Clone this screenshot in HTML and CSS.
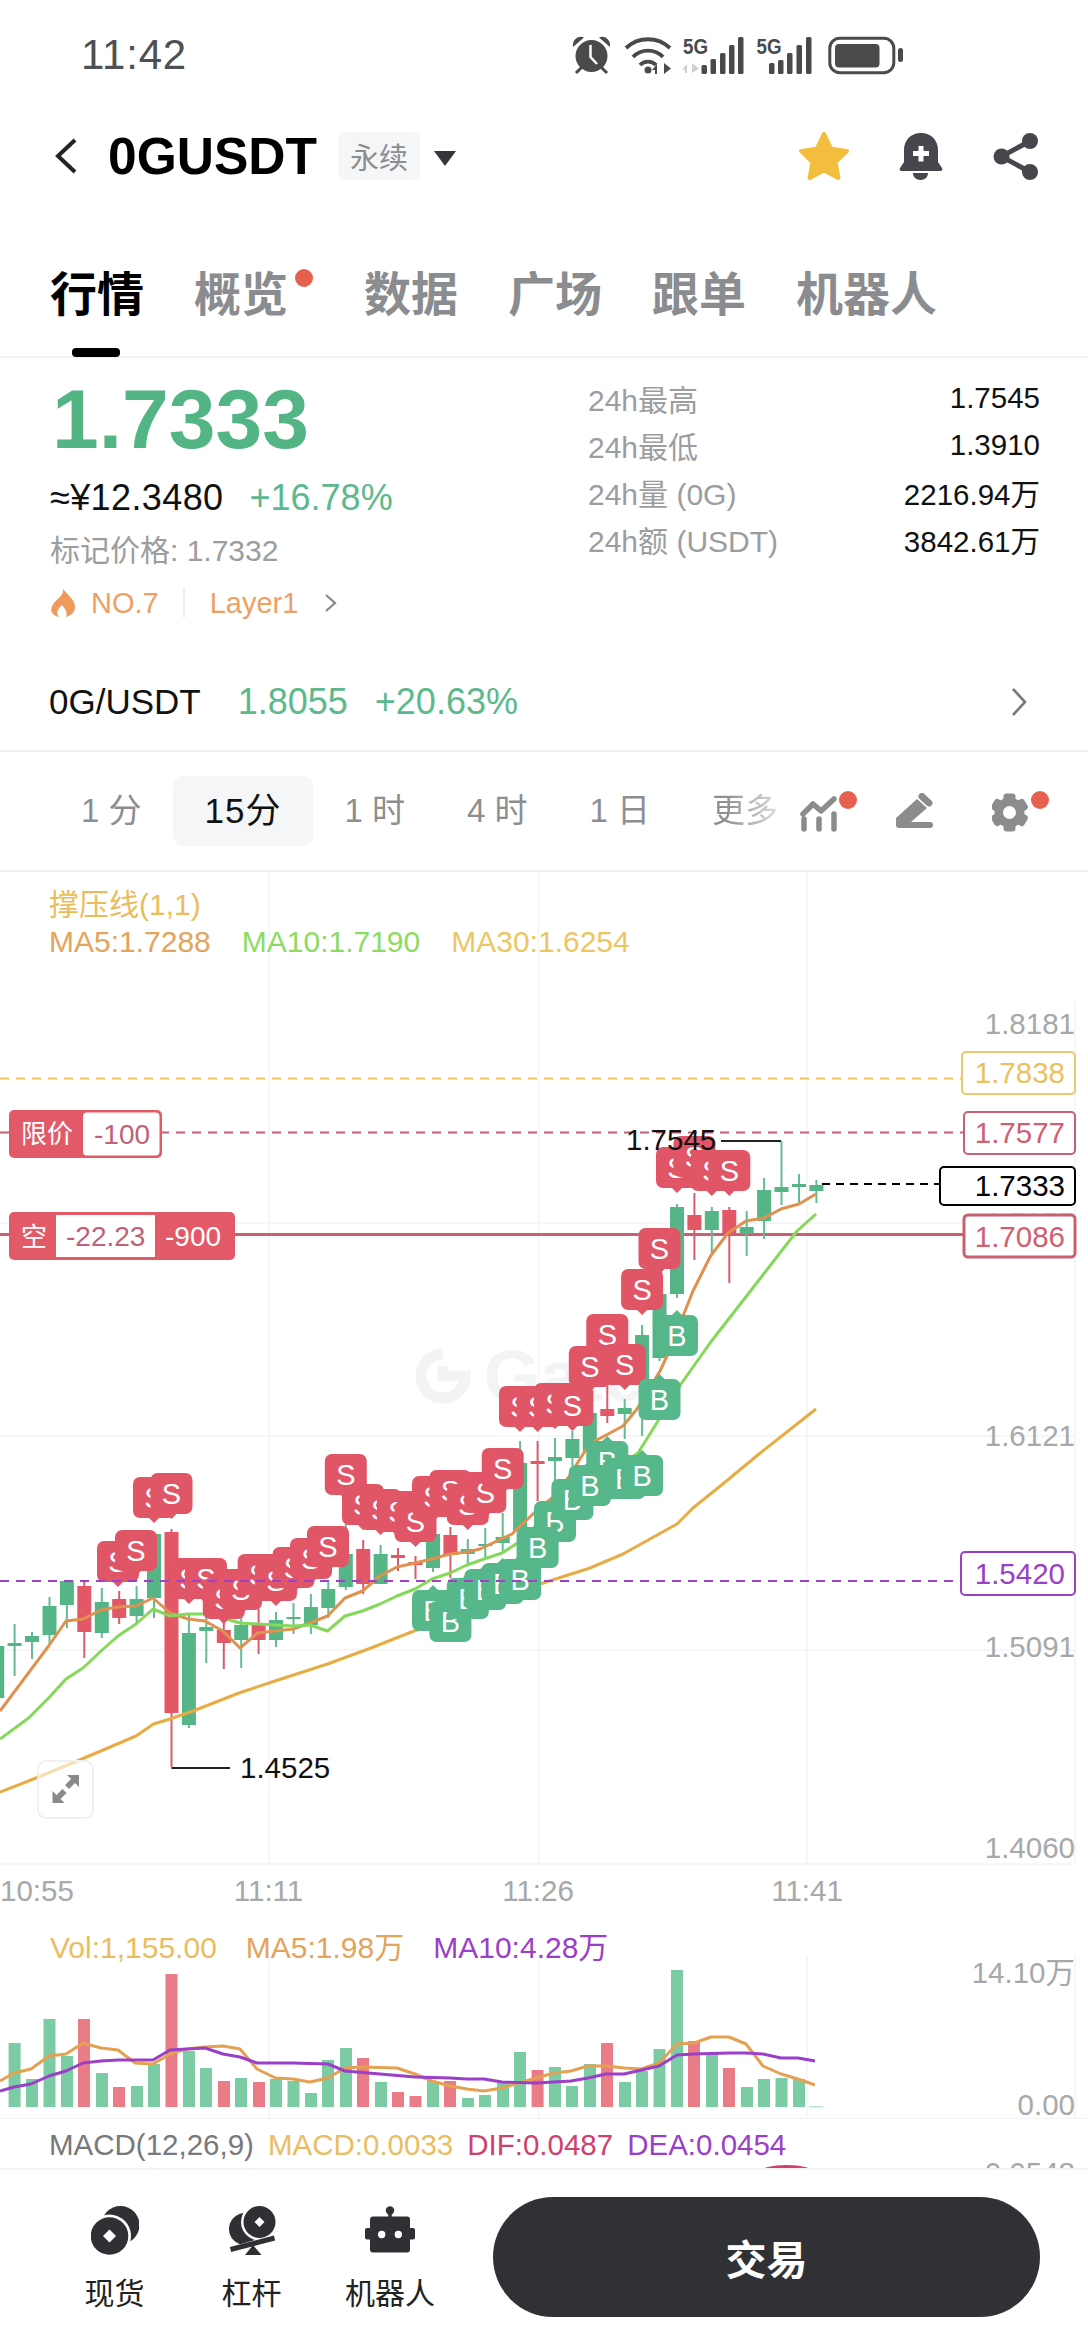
FILE: index.html
```html
<!DOCTYPE html>
<html lang="zh">
<head>
<meta charset="utf-8">
<title>0GUSDT</title>
<link rel="stylesheet" href="styles.css">
</head>
<body>
<div class="page">
  <div class="status">
    <span class="time">11:42</span>
    <svg class="status-icons" viewBox="0 0 360 70" width="360" height="70">
      <g fill="#4a4a4d" stroke="none">
        <circle cx="31.5" cy="36" r="16"/>
        <path d="M13 27C12 20 18 15 24 17.500L13 27ZM50 27C51 20 45 15 39 17.500L50 27Z"/>
        <path d="M30.500 25V37L37 44" fill="none" stroke="#fff" stroke-width="2.500"/>
        <path d="M16 53L22 47M47 53L41 47" fill="none" stroke="#4a4a4d" stroke-width="3"/>
        <g fill="none" stroke="#4a4a4d" stroke-width="3.800">
          <path d="M66 28A32 32 0 0 1 110 28"/>
          <path d="M73 37A21 21 0 0 1 103 37"/>
          <path d="M80 45A11 11 0 0 1 96 45"/>
        </g>
        <circle cx="88" cy="50" r="3.500"/>
        <path d="M97 54V44L92 50H95V54ZM104 43V54L111 48.500Z"/>
        <text class="five" x="123" y="33.500" textLength="25" lengthAdjust="spacingAndGlyphs">5G</text>
        <path d="M127 53V44L122 49.500H125V53ZM132 43V53L139 48.500Z" fill="#d0d0d2"/>
        <rect x="141.500" y="45" width="5.500" height="9" rx="1.500"/>
        <rect x="150.500" y="39" width="5.500" height="15" rx="1.500"/>
        <rect x="160" y="33" width="5.500" height="21" rx="1.500"/>
        <rect x="169" y="25" width="5.500" height="29" rx="1.500"/>
        <rect x="178" y="17" width="5.500" height="37" rx="1.500"/>
        <text class="five" x="196.500" y="33.500" textLength="25" lengthAdjust="spacingAndGlyphs">5G</text>
        <rect x="209" y="43" width="5.500" height="11" rx="1.500"/>
        <rect x="218" y="40" width="5.500" height="14" rx="1.500"/>
        <rect x="227" y="33" width="5.500" height="21" rx="1.500"/>
        <rect x="236.500" y="25" width="5.500" height="29" rx="1.500"/>
        <rect x="246" y="17" width="5.500" height="37" rx="1.500"/>
        <rect x="269.800" y="18.200" width="64" height="34.500" rx="10" fill="none" stroke="#4a4a4d" stroke-width="3"/>
        <rect x="275" y="24" width="44.500" height="23.500" rx="4"/>
        <rect x="338" y="28" width="5" height="14" rx="2.500"/>
      </g>
    </svg>
  </div>

  <header class="header">
    <svg class="back" viewBox="0 0 24 38" width="24" height="38"><path d="M21 3L4 19L21 35" fill="none" stroke="#222" stroke-width="4"/></svg>
    <span class="symbol">0GUSDT</span>
    <span class="perp">永续</span>
    <svg class="caret" viewBox="0 0 22 15" width="22" height="15"><path d="M0 0H22L11 15Z" fill="#35363a"/></svg>
    <div class="header-icons">
      <svg viewBox="1.500 1.700 21 20.200" width="50" height="48"><polygon points="12,2.600 15,8.800 21.600,9.700 16.800,14.400 18,21 12,17.800 6,21 7.200,14.400 2.400,9.700 9,8.800" fill="#f3bd3e" stroke="#f3bd3e" stroke-width="1.800" stroke-linejoin="round"/></svg>
      <svg viewBox="0 0 44 47" width="44" height="47"><path d="M22 0C12 0 5 7 5 17V29L1 35C0 37 1 38 3 38H41C43 38 44 37 43 35L39 29V17C39 7 32 0 22 0Z" fill="#46474c"/><path d="M14 40H29C29 44 26 47 21.500 47S14 44 14 40Z" fill="#46474c"/><path d="M19.500 13h5v5h5.500v5h-5.500v5.500h-5v-5.500h-5.500v-5h5.500z" fill="#fff"/></svg>
      <svg viewBox="0 0 45 47" width="45" height="47"><path d="M37 8L8.500 23.500L37 39" fill="none" stroke="#46474c" stroke-width="5"/><circle cx="37" cy="8" r="8" fill="#46474c"/><circle cx="8.500" cy="23.500" r="8" fill="#46474c"/><circle cx="37" cy="39" r="8" fill="#46474c"/></svg>
    </div>
  </header>

  <nav class="tabs">
    <div class="tab tab-on">行情<i class="tab-bar"></i></div>
    <div class="tab tab-dot">概览<i class="dot"></i></div>
    <div class="tab">数据</div>
    <div class="tab">广场</div>
    <div class="tab">跟单</div>
    <div class="tab">机器人</div>
  </nav>

  <section class="stats">
    <div class="stats-left">
      <div class="price">1.7333</div>
      <div class="sub"><span class="cny">≈¥12.3480</span><span class="up">+16.78%</span></div>
      <div class="mark">标记价格: 1.7332</div>
      <div class="rank">
        <svg viewBox="0 0 25 28" width="25" height="28"><path d="M13 0C14 6 8 9 4 14C1 18 0 22 3 25C5 27 8 28 9 28C6 25 7 20 12 16C15 20 18 23 16 28C20 27 25 24 25 18C25 11 18 6 13 0Z" fill="#ef9a5c"/></svg>
        <span class="rank-no">NO.7</span>
        <i class="rank-sep"></i>
        <span>Layer1</span>
        <svg class="rank-arrow" viewBox="0 0 13 18" width="13" height="18"><path d="M2 1L11 9L2 17" fill="none" stroke="#888" stroke-width="2.200"/></svg>
      </div>
    </div>
    <div class="stats-right">
      <div class="row"><span>24h最高</span><b>1.7545</b></div>
      <div class="row"><span>24h最低</span><b>1.3910</b></div>
      <div class="row"><span>24h量 (0G)</span><b>2216.94万</b></div>
      <div class="row"><span>24h额 (USDT)</span><b>3842.61万</b></div>
    </div>
  </section>

  <section class="spot">
    <span class="spot-name">0G/USDT</span>
    <span class="spot-val">1.8055</span>
    <span class="spot-val">+20.63%</span>
    <svg class="spot-arrow" viewBox="0 0 16 28" width="16" height="28"><path d="M2 1L14 14L2 27" fill="none" stroke="#77797c" stroke-width="2.600"/></svg>
  </section>

  <section class="periods">
    <span class="per">1 分</span>
    <span class="per per-on">15分</span>
    <span class="per">1 时</span>
    <span class="per">4 时</span>
    <span class="per">1 日</span>
    <span class="per per-more">更多</span>
    <div class="tools">
      <svg viewBox="0 0 57 41" width="57" height="41"><g fill="none" stroke="#8a8c8e" stroke-linecap="round" stroke-linejoin="round"><path d="M3 23L13 13L21 20L34 8" stroke-width="5.500"/><path d="M4 28V38M19 28V38M34 23V38" stroke-width="5.500"/></g><circle cx="48" cy="9" r="9" fill="#e7604f"/></svg>
      <svg class="tool-pen" viewBox="0 0 37 36" width="37" height="36"><path d="M0 25L21 6L31 15L15 29H34a3 3 0 0 1 0 6H3a3 3 0 0 1 -3 -3Z" fill="#8a8c8e"/><path d="M26 3.500L33 10" stroke="#8a8c8e" stroke-width="7" stroke-linecap="round"/></svg>
      <svg viewBox="0 0 57 41" width="57" height="41"><g transform="translate(17.500,21.500)" fill="#8a8c8e"><circle r="15"/><rect x="-6" y="-19" width="12" height="9" rx="3"/><rect x="-6" y="-19" width="12" height="9" rx="3" transform="rotate(60)"/><rect x="-6" y="-19" width="12" height="9" rx="3" transform="rotate(120)"/><rect x="-6" y="-19" width="12" height="9" rx="3" transform="rotate(180)"/><rect x="-6" y="-19" width="12" height="9" rx="3" transform="rotate(240)"/><rect x="-6" y="-19" width="12" height="9" rx="3" transform="rotate(300)"/><circle r="6.500" fill="#fff"/></g><circle cx="48" cy="9" r="9" fill="#e7604f"/></svg>
    </div>
  </section>

  <section class="chart">
    <svg class="plot" viewBox="0 871 1088 1043" width="1088" height="1043">
      <defs>
        <path id="ms" d="M-14 0H14a7 7 0 0 1 7 7V34a7 7 0 0 1 -7 7H5L0 46L-5 41H-14a7 7 0 0 1 -7 -7V7a7 7 0 0 1 7 -7Z"/>
        <path id="mb" d="M-14 0H-5L0 -5L5 0H14a7 7 0 0 1 7 7V34a7 7 0 0 1 -7 7H-14a7 7 0 0 1 -7 -7V7a7 7 0 0 1 7 -7Z"/>
      </defs>
      <path class="grid" d="M269 871V1863M538.500 871V1863M807 871V1863M1075 1000V1863M0 1222H1075M0 1435H1075M0 1649H1075M0 1863H1075"/>
      <g class="wm"><path d="M443 1353A22 22 0 1 0 465 1375H443V1365" fill="none" stroke="#f1f3f4" stroke-width="11"/><text class="wm-t" x="484" y="1400">Gate</text></g>

      <text class="ax" x="1075" y="1033" text-anchor="end">1.8181</text>
      <text class="ax" x="1075" y="1445" text-anchor="end">1.6121</text>
      <text class="ax" x="1075" y="1656" text-anchor="end">1.5091</text>
      <text class="ax" x="1075" y="1857" text-anchor="end">1.4060</text>
      <text class="ax ax-faint" x="1075" y="1232" text-anchor="end">1.7157</text>

      <path d="M0 1077.500H961" class="dash-y"/>
      <path d="M0 1131.500H963" class="dash-r"/>
      <path d="M0 1233.500H963" class="line-r"/>

      <path class="wick-g" d="M816.400 1179V1202M799 1173V1203M781.500 1140V1204M764.100 1177V1238M746.700 1210V1255M711.800 1206V1252M677 1203V1297M659.500 1280V1360M642.100 1324V1435M624.700 1398V1438M589.800 1400V1450M572.400 1430V1465M555 1437V1490M520.100 1440V1540M502.700 1512V1550M485.300 1527V1557M467.800 1538V1563M433 1530V1571M380.600 1544V1583M345.800 1523V1589M328.300 1580V1617M310.900 1593V1633M293.500 1602V1633M276 1611V1646M241.200 1610V1667M206.300 1600V1662M188.900 1613V1727M154 1533V1617M136.600 1585V1622M101.800 1587V1637M66.900 1580V1627M49.500 1596V1643M32 1631V1658M14.600 1623V1675"/>
      <path class="wick-r" d="M729.300 1206V1282M694.400 1192V1259M607.300 1385V1422M537.600 1440V1500M450.400 1526V1577M415.500 1555V1578M398 1547V1570M363.200 1539V1593M258.600 1608V1653M223.800 1613V1668M171.500 1528V1766M119.200 1590V1623M84.300 1580V1657"/>
      <path class="body-g" d="M809.400 1184h14v6h-14zM792 1183h14v3h-14zM774.500 1186h14v5h-14zM757.100 1189h14v31h-14zM739.700 1226h14v7h-14zM704.800 1210h14v19h-14zM670 1206h14v87h-14zM652.500 1293h14v64h-14zM635.100 1334h14v46h-14zM617.700 1407h14v6h-14zM582.800 1412h14v38h-14zM565.400 1438h14v19h-14zM548 1456h14v4h-14zM513.100 1462h14v68h-14zM495.700 1536h14v6h-14zM478.300 1543h14v2h-14zM460.800 1548h14v5h-14zM426 1533h14v34h-14zM373.600 1553h14v30h-14zM338.800 1553h14v33h-14zM321.300 1588h14v19h-14zM303.900 1606h14v18h-14zM286.500 1616h14v2h-14zM269 1619h14v20h-14zM234.200 1624h14v15h-14zM199.300 1626h14v4h-14zM181.900 1632h14v92h-14zM147 1533h14v64h-14zM129.600 1598h14v17h-14zM94.800 1601h14v31h-14zM59.900 1580h14v24h-14zM42.500 1605h14v29h-14zM25 1635h14v6h-14zM7.600 1642h14v3h-14zM-9.800 1645h14v52h-14z"/>
      <path class="body-r" d="M722.300 1209h14v24h-14zM687.400 1214h14v15h-14zM600.300 1408h14v7h-14zM530.600 1460h14v3h-14zM443.400 1534h14v20h-14zM408.500 1561h14v3h-14zM391 1554h14v3h-14zM356.200 1548h14v35h-14zM251.600 1624h14v15h-14zM216.800 1629h14v13h-14zM164.500 1531h14v181h-14zM112.200 1598h14v19h-14zM77.300 1585h14v46h-14z"/>

      <polyline class="ma ma5" points="0,1710 48.600,1645 66,1620 83,1618 101,1609 118,1606 136,1605 153,1597 170,1612 188,1618 205,1620 223,1630 240,1647 257.500,1632 275,1630 293,1628 310,1622 327.500,1615 345,1597 362.500,1590 380,1575 397,1566 415,1562 432,1558 450,1553 467,1551 480,1548 512,1533 533,1513 552,1497 568,1477 585,1450 595,1440 623,1425 637,1408 660,1370 667,1355 693,1290 710.500,1255 728,1232 746,1220 764,1217 781,1208 799,1203 816,1193"/>
      <polyline class="ma ma10" points="0,1738 28.600,1717 48.600,1697 66,1678 83,1667 101,1650 118,1635 136,1623 153,1608 170,1615 188,1613 205,1613 223,1617 240,1622 257.500,1623 275,1624 293,1625 310,1624 327.500,1630 345,1615 362.500,1610 380,1603 397,1595 415,1588 432,1578 450,1572 467,1564 484,1558 502,1552 516,1543 638,1452 681,1383 710,1342 745,1297 797,1230 816,1213"/>
      <polyline class="ma ma30" points="0,1791 36,1777 82,1758 136,1735 153.500,1723 170,1718 193,1710 239,1692 275,1680 327.500,1663 371,1647 414,1630 543,1582 590,1567 623,1553 677,1523 693,1507 724,1482 759,1453 816,1408"/>

      <g class="mk-s">
        <g transform="translate(118,1540)"><use href="#ms"/><text x="0" y="31">S</text></g>
        <g transform="translate(136,1529)"><use href="#ms"/><text x="0" y="31">S</text></g>
        <g transform="translate(154,1476)"><use href="#ms"/><text x="0" y="31">S</text></g>
        <g transform="translate(171.500,1472)"><use href="#ms"/><text x="0" y="31">S</text></g>
        <g transform="translate(189,1557)"><use href="#ms"/><text x="0" y="31">S</text></g>
        <g transform="translate(206,1557)"><use href="#ms"/><text x="0" y="31">S</text></g>
        <g transform="translate(223.800,1577)"><use href="#ms"/><text x="0" y="31">S</text></g>
        <g transform="translate(241,1568)"><use href="#ms"/><text x="0" y="31">S</text></g>
        <g transform="translate(258.600,1553)"><use href="#ms"/><text x="0" y="31">S</text></g>
        <g transform="translate(276,1559)"><use href="#ms"/><text x="0" y="31">S</text></g>
        <g transform="translate(293.500,1546)"><use href="#ms"/><text x="0" y="31">S</text></g>
        <g transform="translate(311,1537)"><use href="#ms"/><text x="0" y="31">S</text></g>
        <g transform="translate(328,1525)"><use href="#ms"/><text x="0" y="31">S</text></g>
        <g transform="translate(363,1483)"><use href="#ms"/><text x="0" y="31">S</text></g>
        <g transform="translate(380.600,1488)"><use href="#ms"/><text x="0" y="31">S</text></g>
        <g transform="translate(398,1490)"><use href="#ms"/><text x="0" y="31">S</text></g>
        <g transform="translate(345.800,1453)"><use href="#ms"/><text x="0" y="31">S</text></g>
        <g transform="translate(415.500,1500)"><use href="#ms"/><text x="0" y="31">S</text></g>
        <g transform="translate(433,1475)"><use href="#ms"/><text x="0" y="31">S</text></g>
        <g transform="translate(450.400,1469)"><use href="#ms"/><text x="0" y="31">S</text></g>
        <g transform="translate(467.800,1483)"><use href="#ms"/><text x="0" y="31">S</text></g>
        <g transform="translate(485.300,1471)"><use href="#ms"/><text x="0" y="31">S</text></g>
        <g transform="translate(502.700,1447)"><use href="#ms"/><text x="0" y="31">S</text></g>
        <g transform="translate(520,1385)"><use href="#ms"/><text x="0" y="31">S</text></g>
        <g transform="translate(537.600,1385)"><use href="#ms"/><text x="0" y="31">S</text></g>
        <g transform="translate(555,1382)"><use href="#ms"/><text x="0" y="31">S</text></g>
        <g transform="translate(572.400,1384)"><use href="#ms"/><text x="0" y="31">S</text></g>
        <g transform="translate(607.300,1313)"><use href="#ms"/><text x="0" y="31">S</text></g>
        <g transform="translate(589.800,1345)"><use href="#ms"/><text x="0" y="31">S</text></g>
        <g transform="translate(624.700,1343)"><use href="#ms"/><text x="0" y="31">S</text></g>
        <g transform="translate(642.100,1268)"><use href="#ms"/><text x="0" y="31">S</text></g>
        <g transform="translate(659.500,1227)"><use href="#ms"/><text x="0" y="31">S</text></g>
        <g transform="translate(677,1146)"><use href="#ms"/><text x="0" y="31">S</text></g>
        <g transform="translate(694.400,1135)"><use href="#ms"/><text x="0" y="31">S</text></g>
        <g transform="translate(711.800,1149)"><use href="#ms"/><text x="0" y="31">S</text></g>
        <g transform="translate(729.300,1149)"><use href="#ms"/><text x="0" y="31">S</text></g>
      </g>
      <g class="mk-b">
        <g transform="translate(607.300,1440)"><use href="#mb"/><text x="0" y="31">B</text></g>
        <g transform="translate(624.700,1457)"><use href="#mb"/><text x="0" y="31">B</text></g>
        <g transform="translate(642.100,1454)"><use href="#mb"/><text x="0" y="31">B</text></g>
        <g transform="translate(555,1500)"><use href="#mb"/><text x="0" y="31">B</text></g>
        <g transform="translate(572.400,1478)"><use href="#mb"/><text x="0" y="31">B</text></g>
        <g transform="translate(589.800,1464)"><use href="#mb"/><text x="0" y="31">B</text></g>
        <g transform="translate(537.600,1526)"><use href="#mb"/><text x="0" y="31">B</text></g>
        <g transform="translate(433,1589)"><use href="#mb"/><text x="0" y="31">B</text></g>
        <g transform="translate(450.400,1600)"><use href="#mb"/><text x="0" y="31">B</text></g>
        <g transform="translate(467.800,1577)"><use href="#mb"/><text x="0" y="31">B</text></g>
        <g transform="translate(485.300,1568)"><use href="#mb"/><text x="0" y="31">B</text></g>
        <g transform="translate(502.700,1562)"><use href="#mb"/><text x="0" y="31">B</text></g>
        <g transform="translate(520.100,1558)"><use href="#mb"/><text x="0" y="31">B</text></g>
        <g transform="translate(659.500,1378)"><use href="#mb"/><text x="0" y="31">B</text></g>
        <g transform="translate(677,1314)"><use href="#mb"/><text x="0" y="31">B</text></g>
      </g>

      <path d="M0 1580H960" class="dash-p"/>
      <path d="M822 1183H939" class="dash-k"/>
      <path d="M721 1140H781M171.500 1767H230" class="leader"/>
      <text class="note" x="626" y="1149">1.7545</text>
      <text class="note" x="240" y="1777">1.4525</text>

      <rect class="tag tag-y" x="962" y="1051" width="113" height="42" rx="4"/>
      <text class="tv tv-y" x="1065" y="1082" text-anchor="end">1.7838</text>
      <rect class="tag tag-r" x="964" y="1111" width="111" height="42" rx="4"/>
      <text class="tv tv-r" x="1065" y="1142" text-anchor="end">1.7577</text>
      <rect class="tag tag-k" x="940" y="1166" width="135" height="38" rx="4"/>
      <text class="tv tv-k" x="1065" y="1195" text-anchor="end">1.7333</text>
      <rect class="tag tag-r tag-thick" x="964" y="1214" width="111" height="42" rx="4"/>
      <text class="tv tv-r" x="1065" y="1246" text-anchor="end">1.7086</text>
      <rect class="tag tag-p" x="961" y="1551" width="114" height="43" rx="4"/>
      <text class="tv tv-p" x="1065" y="1583" text-anchor="end">1.5420</text>

      <rect class="otag" x="9" y="1109" width="153" height="48" rx="5"/>
      <rect x="83" y="1111.500" width="76.500" height="43" rx="4" fill="#fff"/>
      <text class="ot ot-cjk" x="21" y="1142">限价</text>
      <text class="ot ot-r" x="94" y="1143">-100</text>
      <rect class="otag" x="9" y="1211" width="226" height="48" rx="5"/>
      <rect x="56" y="1214" width="99" height="42" fill="#fff"/>
      <text class="ot ot-cjk" x="21" y="1245">空</text>
      <text class="ot ot-r" x="66" y="1245">-22.23</text>
      <text class="ot ot-w" x="165" y="1245">-900</text>

      <rect class="expand" x="38" y="1760" width="55" height="57" rx="8"/>
      <path d="M67 1774H79V1786L75 1782L69 1788L65 1784L71 1778ZM52.500 1802V1790L56.500 1794L62.500 1788L66.500 1792L60.500 1798L64.500 1802Z" fill="#8a8a8a"/>

      <text class="ax" x="0" y="1900">10:55</text>
      <text class="ax" x="268.500" y="1900" text-anchor="middle">11:11</text>
      <text class="ax" x="538" y="1900" text-anchor="middle">11:26</text>
      <text class="ax" x="807" y="1900" text-anchor="middle">11:41</text>
    </svg>
    <div class="legend">
      <div class="lg-a">撑压线(1,1)</div>
      <div class="lg-b"><span class="c-ma5">MA5:1.7288</span><span class="c-ma10">MA10:1.7190</span><span class="c-ma30">MA30:1.6254</span></div>
    </div>
  </section>

  <section class="vol">
    <svg class="plot" viewBox="0 1914 1088 204" width="1088" height="204">
      <path class="grid" d="M269 1955V2117M538.500 1955V2117M807 1955V2117M1075 1955V2117"/>
      <path class="bar-g" d="M8.600 2042h12V2106h-12zM26 2078h12V2106h-12zM43.500 2018h12V2106h-12zM61 2055h12V2106h-12zM96 2072h12V2106h-12zM131 2085h12V2106h-12zM148 2063h12V2106h-12zM183 2050h12V2106h-12zM200 2067h12V2106h-12zM235 2077h12V2106h-12zM270 2078h12V2106h-12zM287.500 2080h12V2106h-12zM305 2092h12V2106h-12zM322 2059h12V2106h-12zM340 2047h12V2106h-12zM375 2081h12V2106h-12zM427 2080h12V2106h-12zM462 2097h12V2106h-12zM479 2094h12V2106h-12zM497 2082h12V2106h-12zM514 2051h12V2106h-12zM549 2066h12V2106h-12zM566 2085h12V2106h-12zM584 2063h12V2106h-12zM619 2081h12V2106h-12zM636 2070h12V2106h-12zM653.500 2048h12V2106h-12zM671 1969h12V2106h-12zM706 2053h12V2106h-12zM741 2086h12V2106h-12zM758 2078h12V2106h-12zM775.500 2077h12V2106h-12zM793 2078h12V2106h-12z"/>
      <path class="bar-r" d="M78 2018h12V2106h-12zM113 2086h12V2106h-12zM165.500 1973h12V2106h-12zM218 2080h12V2106h-12zM253 2081h12V2106h-12zM357 2057h12V2106h-12zM392 2091h12V2106h-12zM409.500 2095h12V2106h-12zM444 2080h12V2106h-12zM531.600 2069h12V2106h-12zM601 2042h12V2106h-12zM688 2040h12V2106h-12zM723 2067h12V2106h-12z"/>
      <rect x="809" y="2105" width="14" height="1.500" fill="#bfe5d3"/>
      <polyline class="vline v5" points="0,2080 14,2072 31,2068 49,2055 66,2053 83,2042 101,2047 118,2049 135,2062 153,2063 170,2053 187,2048 205,2046 223,2045 240,2048 257,2068 275.500,2077 293,2078 310,2081 328,2077 345,2067 362,2066 397,2067 415,2073 432,2080 450,2085 467,2088 484,2090 502,2087 519,2082 536,2077 554,2072 571,2070 588,2065 606.500,2065 624,2067 641,2068 659,2062 677,2043 694,2042 711,2036 729,2036 746,2043 763,2065 781,2073 798,2078 815,2084"/>
      <polyline class="vline v10" points="0,2090 14,2086 31,2083 49,2075 66,2070 83,2062 101,2060 118,2059 153,2059 170,2049 187,2048 205,2047 223,2053 240,2056 257,2062 293,2062 328,2063 345,2070 380,2073 415,2076 450,2077 467,2078 484,2078 502,2081 536,2082 571,2080 588,2077 606,2073 624,2073 659,2065 677,2054 694,2053 729,2052 746,2052 763,2053 781,2057 798,2057 815,2060"/>
      <text class="ax" x="1075" y="1982" text-anchor="end">14.10万</text>
      <text class="ax" x="1075" y="2114" text-anchor="end">0.00</text>
    </svg>
    <div class="vol-legend"><span class="c-vol">Vol:1,155.00</span><span class="c-ma5">MA5:1.98万</span><span class="c-pur">MA10:4.28万</span></div>
  </section>

  <section class="macd">
    <div class="macd-legend"><span class="c-grey">MACD(12,26,9)</span><span class="c-vol">MACD:0.0033</span><span class="c-pink">DIF:0.0487</span><span class="c-pur">DEA:0.0454</span></div>
    <span class="macd-axis">0.0548</span>
    <i class="macd-blob"></i>
  </section>

  <footer class="nav">
    <div class="nav-item">
      <svg viewBox="0 0 48 50" width="48" height="50"><circle cx="29.500" cy="19" r="19" fill="#2f3034"/><circle cx="18.500" cy="30" r="21.500" fill="#fff"/><circle cx="18.500" cy="30" r="18.800" fill="#2f3034"/><path d="M18.500 23.500L25 30L18.500 36.500L12 30Z" fill="#fff"/></svg>
      <span>现货</span>
    </div>
    <div class="nav-item">
      <svg viewBox="0 0 48 50" width="48" height="50"><circle cx="17" cy="23" r="16" fill="#2f3034"/><circle cx="31.500" cy="16" r="18.500" fill="#fff"/><circle cx="31.500" cy="16" r="16" fill="#2f3034"/><path d="M31.500 11L36.500 16L31.500 21L26.500 16Z" fill="#fff"/><path d="M0 47L48 33" stroke="#fff" stroke-width="10"/><path d="M25 39L33.500 49H17Z" fill="#2f3034"/><path d="M2.500 43.500L46.500 32" stroke="#2f3034" stroke-width="5"/></svg>
      <span>杠杆</span>
    </div>
    <div class="nav-item">
      <svg viewBox="0 0 50 50" width="50" height="50"><circle cx="25" cy="4.500" r="4.200" fill="#2f3034"/><rect x="23.300" y="5" width="3.400" height="8" fill="#2f3034"/><rect x="5" y="10.500" width="40" height="36" rx="3" fill="#2f3034"/><rect x="0" y="22" width="50" height="11.500" rx="2" fill="#2f3034"/><circle cx="16.700" cy="28.500" r="3.700" fill="#fff"/><circle cx="33.300" cy="28.500" r="3.700" fill="#fff"/></svg>
      <span>机器人</span>
    </div>
    <button class="trade">交易</button>
  </footer>
</div>
</body>
</html>
```
FILE: styles.css
```css
* { box-sizing: border-box; }
html, body { margin: 0; padding: 0; background: #fff; }
body { font-family: "Liberation Sans", "Noto Sans CJK SC", sans-serif; }
.page { width: 1088px; height: 2348px; overflow: hidden; display: flex; flex-direction: column; }

.status { height: 110px; display: flex; align-items: center; padding-left: 81px; }
.time { font-size: 42px; letter-spacing: .8px; color: #4e5053; }
.status-icons { margin-left: auto; margin-right: 168px; }
.five { font-size: 22px; font-weight: 700; fill: #4a4a4d; }

.header { height: 92px; display: flex; align-items: center; padding-left: 54px; padding-right: 50px; }
.symbol { font-size: 51.500px; font-weight: 700; color: #000; margin-left: 30px; }
.perp { margin-left: 21px; width: 82px; height: 48px; border-radius: 6px; background: #f5f6f7; color: #8b8d90; font-size: 29px; display: flex; align-items: center; justify-content: center; }
.caret { margin-left: 14px; margin-top: 4px; }
.header-icons { margin-left: auto; display: flex; align-items: center; gap: 50px; }

.tabs { height: 156px; display: flex; gap: 50px; padding: 68px 0 0 50px; border-bottom: 2px solid #f2f3f4; align-items: flex-start; }
.tab { position: relative; font-size: 47px; line-height: 50px; font-weight: 700; color: #8a8c8f; }
.tab-on { color: #000; }
.tab-dot { margin-right: 26px; }
.dot { position: absolute; right: -25px; top: -1px; width: 18px; height: 18px; border-radius: 50%; background: #e7604f; }
.tab-bar { position: absolute; left: 22px; top: 78px; width: 48px; height: 9px; border-radius: 4px; background: #000; }

.stats { height: 296px; display: flex; }
.stats-left { width: 588px; padding-left: 50px; }
.price { margin: 20px 0 0 2px; font-size: 84px; line-height: 82px; font-weight: 700; color: #52b583; }
.sub { margin-top: 18px; display: flex; gap: 26px; font-size: 36px; line-height: 40px; }
.cny { color: #111; letter-spacing: .4px; }
.up { color: #5bb98b; }
.mark { margin-top: 15px; font-size: 30px; line-height: 36px; color: #9b9d9f; }
.rank { margin-top: 16px; height: 36px; display: flex; align-items: center; font-size: 29px; color: #ee9f62; }
.rank-no { margin-left: 16px; }
.rank-sep { width: 2px; height: 30px; background: #f0f0f0; margin: 0 25px 0 24px; }
.rank-arrow { margin-left: 26px; }
.stats-right { width: 452px; padding-top: 16px; }
.row { height: 47px; display: flex; justify-content: space-between; align-items: center; font-size: 30px; color: #9b9d9f; }
.row b { font-size: 29.500px; font-weight: 400; color: #111; }

.spot { height: 98px; display: flex; align-items: center; padding: 0 61px 0 49px; border-bottom: 2px solid #f0f1f2; font-size: 36px; }
.spot-name { color: #111; font-size: 35px; margin-right: 37px; }
.spot-val { color: #5bb98b; margin-right: 27px; }
.spot-arrow { margin-left: auto; }

.periods { height: 120px; display: flex; align-items: center; padding-left: 50px; border-bottom: 2px solid #f1f2f3; padding-right: 39px; }
.per { padding: 0 31px; font-size: 33px; line-height: 70px; color: #8c8e91; }
.per-on { padding: 0 32px; font-size: 35px; background: #f5f6f7; border-radius: 10px; color: #111; letter-spacing: 1px; }
.per-more { padding-right: 0; background: linear-gradient(90deg, #8c8e91 45%, #dcdddf); -webkit-background-clip: text; background-clip: text; color: transparent; }
.tools { margin-left: auto; display: flex; align-items: center; gap: 39px; }
.tool-pen { margin-right: 20px; }

.chart { position: relative; height: 1043px; }
.plot { position: absolute; left: 0; top: 0; }
.legend { position: relative; padding: 19px 0 0 49px; font-size: 30px; line-height: 28px; }
.lg-a { color: #e9bd5d; }
.lg-b { margin-top: 9px; display: flex; gap: 31px; }
.c-ma5 { color: #e3a45c; }
.c-ma10 { color: #8edb62; }
.c-ma30 { color: #ecc663; }
.c-vol { color: #e9be62; }
.c-pur { color: #9b3fc9; }
.c-pink { color: #cf3f6f; }
.c-grey { color: #77797c; }

.grid { fill: none; stroke: #f3f4f5; stroke-width: 1.500; }
.wm-t { font-size: 72px; font-weight: 700; fill: #f3f4f5; }
.ax { font-size: 29.500px; fill: #a6a8aa; }
.ax-faint { fill: #d8d9da; }
.note { font-size: 29.500px; fill: #111; }
.dash-y, .dash-r, .dash-p, .dash-k { fill: none; stroke-width: 2px; stroke-dasharray: 9 7; }
.dash-y { stroke: #ecc35f; }
.dash-r { stroke: #bf6178; }
.dash-p { stroke: #a03fc8; }
.dash-k { stroke: #000; stroke-dasharray: 8 6; }
.line-r { fill: none; stroke: #c9606f; stroke-width: 3px; }
.leader { fill: none; stroke: #222; stroke-width: 2px; }
.wick-g { fill: none; stroke: #65bb92; stroke-width: 2px; }
.wick-r { fill: none; stroke: #d95c6d; stroke-width: 2px; }
.body-g { fill: #55b586; }
.body-r { fill: #e25866; }
.ma { fill: none; stroke-width: 3px; stroke-linejoin: round; }
.ma5 { stroke: #df9250; }
.ma10 { stroke: #84d85a; }
.ma30 { stroke: #e8ac45; }
.mk-s { fill: #e15667; }
.mk-b { fill: #55b78a; }
.mk-s text, .mk-b text { font-size: 29px; fill: #fff; text-anchor: middle; }
.tag { fill: #fff; stroke-width: 2px; }
.tag-y { stroke: #ecc76b; }
.tag-r { stroke: #c9606f; }
.tag-k { stroke: #000; }
.tag-p { stroke: #9a3fc6; }
.tag-thick { stroke-width: 3px; }
.tv { font-size: 29.500px; }
.tv-y { fill: #e9c25f; }
.tv-r { fill: #cf5f72; }
.tv-k { fill: #000; }
.tv-p { fill: #9a3fc6; }
.otag { fill: #e25a68; }
.ot { font-size: 28px; }
.ot-cjk { font-size: 26px; fill: #fff; }
.ot-w { fill: #fff; }
.ot-r { fill: #c2607a; }
.expand { fill: #fff; fill-opacity: .6; stroke: #f0f0f0; stroke-width: 2px; }

.vol { position: relative; height: 204px; border-bottom: 1px solid #f1f2f3; }
.vol-legend { position: relative; padding: 19px 0 0 50px; display: flex; gap: 29px; font-size: 30px; line-height: 28px; }
.bar-g { fill: #7bcba5; }
.bar-r { fill: #e97c86; }
.vline { fill: none; stroke-width: 3px; stroke-linejoin: round; }
.v5 { stroke: #e5a152; }
.v10 { stroke: #9b3fc9; }

.macd { position: relative; flex: 1; overflow: hidden; padding: 12px 0 0 49px; }
.macd-legend { display: flex; gap: 14px; font-size: 29.500px; line-height: 28px; white-space: nowrap; }
.macd-axis { position: absolute; right: 13px; top: 37px; font-size: 29.500px; line-height: 34px; color: #a6a8aa; }
.macd-blob { position: absolute; left: 760px; top: 46px; width: 53px; height: 14px; border-radius: 50%; background: #cf3f6f; }

.nav { height: 180px; flex: none; display: flex; align-items: flex-start; padding: 0 48px 0 46px; border-top: 2px solid #f2f3f4; }
.nav-item { width: 137px; padding-top: 36px; display: flex; flex-direction: column; align-items: center; gap: 22px; font-size: 30px; line-height: 32px; color: #222; }
.nav-item:nth-child(3) { width: 140px; }
.trade { margin: 27px 0 0 auto; width: 547px; height: 120px; border: 0; border-radius: 60px; background: #303135; color: #fff; font: 700 41px "Liberation Sans", "Noto Sans CJK SC", sans-serif; }
```
